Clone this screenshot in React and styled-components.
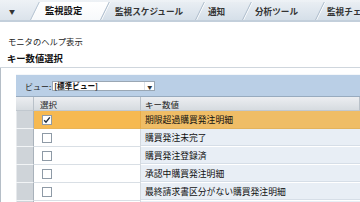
import React from "react";
import styled, { createGlobalStyle } from "styled-components";

const Global = createGlobalStyle`
  html, body { margin: 0; padding: 0; background: #fff; }
  body { width: 360px; height: 202px; overflow: hidden; font-family: "Noto Sans CJK JP", "Liberation Sans", sans-serif; color: #222; }
`;

const Page = styled.div`
  width: 360px;
  height: 202px;
  overflow: hidden;
  display: flex;
  flex-direction: column;
`;

const TabBar = styled.div`
  display: flex;
  align-items: stretch;
  height: 18px;
  padding-top: 2px;
  background: linear-gradient(#eef2f6, #dbe3eb);
  border-bottom: 2px solid #c3cfdb;
  overflow: hidden;
  flex: none;
`;

const MenuButton = styled.div`
  width: 30px;
  flex: none;
  display: flex;
  align-items: center;
  justify-content: center;
  padding-right: 6px;
  box-sizing: border-box;
  font-size: 6px;
  color: #333;
`;

const Tab = styled.div`
  position: relative;
  flex: none;
  width: ${(p) => p.$w}px;
  padding-left: ${(p) => p.$pl}px;
  box-sizing: border-box;
  display: flex;
  align-items: center;
  font-size: ${(p) => (p.$active ? 9.3 : 8.6)}px;
  font-weight: bold;
  color: ${(p) => (p.$active ? "#111" : "#333")};
  white-space: nowrap;
  &::before {
    content: "";
    position: absolute;
    inset: 0;
    transform: skewX(-26deg);
    transform-origin: bottom left;
    background: ${(p) =>
      p.$active ? "linear-gradient(#ffffff, #f7f9fb)" : "linear-gradient(#e9eef3, #d5dfe9)"};
    border-left: 1px solid ${(p) => (p.$active ? "#b5c3d1" : "#aebdcc")};
    box-shadow: inset 1px 0 0 #ffffff;
  }
  & > span {
    position: relative;
    line-height: 1;
  }
`;

const Content = styled.div`
  flex: 1;
  display: flex;
  flex-direction: column;
`;

const HelpLink = styled.div`
  padding: 13px 0 0 8px;
  font-size: 8.3px;
  line-height: 12px;
  color: #222;
`;

const SectionTitle = styled.div`
  padding: 5px 0 0 7px;
  height: 12px;
  font-size: 9.3px;
  line-height: 12px;
  font-weight: bold;
  color: #111;
  border-bottom: 1px solid #cfd6dd;
  padding-bottom: 3px;
`;

const Panel = styled.div`
  flex: 1;
  border-left: 1px solid #b5bec7;
  padding: 6px 0 0 15px;
`;

const Table = styled.div`
  display: flex;
  flex-direction: column;
  border-top: 1px solid #f4f7fa;
`;

const Toolbar = styled.div`
  height: 22px;
  box-sizing: border-box;
  display: flex;
  align-items: center;
  padding-left: 9px;
  gap: 1px;
  background: #bacfe6;
  border-bottom: 1px solid #98abbf;
`;

const ToolLabel = styled.span`
  font-size: 8px;
  color: #222;
  padding-top: 1px;
`;

const Select = styled.div`
  width: 103px;
  height: 10px;
  box-sizing: border-box;
  display: flex;
  align-items: center;
  background: #fff;
  border: 1px solid #9aa7b4;
  font-size: 7.6px;
  font-weight: bold;
  color: #111;
  padding-left: 1px;
  margin-top: 1px;
`;

const SelectText = styled.span`
  flex: 1;
  line-height: 1;
`;

const SelectArrow = styled.span`
  width: 9px;
  height: 100%;
  display: flex;
  align-items: center;
  justify-content: center;
  font-size: 5px;
  color: #333;
  border-left: 1px solid #dde3e9;
`;

const Row = styled.div`
  display: grid;
  grid-template-columns: 18px 107px 1fr;
  height: ${(p) => p.$h}px;
  box-sizing: border-box;
`;

const HeadCell = styled.div`
  display: flex;
  align-items: center;
  padding-left: ${(p) => p.$pl || 0}px;
  font-size: 8.5px;
  color: #222;
  background: linear-gradient(#eceef1, #d6dbe0);
  border-right: 1px solid #b9c1c9;
  border-bottom: 1px solid #c1c8cf;
`;

const SelectorCell = styled.div`
  background: #cfd4d9;
  border-right: 1px solid #a9b2bb;
  border-bottom: 1px solid #f2f4f6;
  box-shadow: inset 1px 0 0 #e6e9ec;
`;

const CheckCell = styled.div`
  display: flex;
  align-items: center;
  padding-left: 8px;
  background: ${(p) => (p.$sel ? "#f6b951" : "#ffffff")};
  border-right: 1px solid ${(p) => (p.$sel ? "#e7ab48" : "#d3d9df")};
  border-bottom: 1px solid ${(p) => (p.$sel ? "#e9b458" : "#d9dfe5")};
`;

const Box = styled.span`
  width: 10px;
  height: 10px;
  box-sizing: border-box;
  background: #fff;
  border: 1px solid #8e9aa6;
  display: flex;
  align-items: center;
  justify-content: center;
`;

const KeyCell = styled.div`
  display: flex;
  align-items: center;
  padding-left: 4px;
  font-size: 8.8px;
  color: #111;
  white-space: nowrap;
  overflow: hidden;
  background: ${(p) => (p.$sel ? "#efbd66" : "#e8eef5")};
  border-bottom: 1px solid ${(p) => (p.$sel ? "#e3b35d" : "#ffffff")};
  box-shadow: inset 0 -2px 0 -1px ${(p) => (p.$sel ? "transparent" : "#d6dee7")};
`;

const Check = () => (
  <svg width="8" height="8" viewBox="0 0 8 8">
    <path d="M1.2 4.2 L3 6.2 L6.8 1.4" fill="none" stroke="#1d2a3a" strokeWidth="1.4" />
  </svg>
);

const tabs = [
  { label: "監視設定", w: 70, pl: 15, active: true },
  { label: "監視スケジュール", w: 95, pl: 15 },
  { label: "通知", w: 47, pl: 13 },
  { label: "分析ツール", w: 73, pl: 13 },
  { label: "監視チェック", w: 90, pl: 12 },
];

const rows = [
  { text: "期限超過購買発注明細", sel: true },
  { text: "購買発注未完了" },
  { text: "購買発注登録済" },
  { text: "承認中購買発注明細" },
  { text: "最終請求書区分がない購買発注明細" },
  { text: "請求書区分 - 請求書未登録の購買発注明細" },
];

export default function App() {
  return (
    <Page>
      <Global />
      <TabBar>
        <MenuButton>▼</MenuButton>
        {tabs.map((t) => (
          <Tab key={t.label} $w={t.w} $pl={t.pl} $active={t.active}>
            <span>{t.label}</span>
          </Tab>
        ))}
      </TabBar>
      <Content>
        <HelpLink>モニタのヘルプ表示</HelpLink>
        <SectionTitle>キー数値選択</SectionTitle>
        <Panel>
          <Table>
            <Toolbar>
              <ToolLabel>ビュー:</ToolLabel>
              <Select>
                <SelectText>[標準ビュー]</SelectText>
                <SelectArrow>▼</SelectArrow>
              </Select>
            </Toolbar>
            <Row $h={14}>
              <HeadCell />
              <HeadCell $pl={6}>選択</HeadCell>
              <HeadCell $pl={4}>キー数値</HeadCell>
            </Row>
            {rows.map((r) => (
              <Row key={r.text} $h={18}>
                <SelectorCell />
                <CheckCell $sel={r.sel}>
                  <Box>{r.sel && <Check />}</Box>
                </CheckCell>
                <KeyCell $sel={r.sel}>{r.text}</KeyCell>
              </Row>
            ))}
          </Table>
        </Panel>
      </Content>
    </Page>
  );
}
